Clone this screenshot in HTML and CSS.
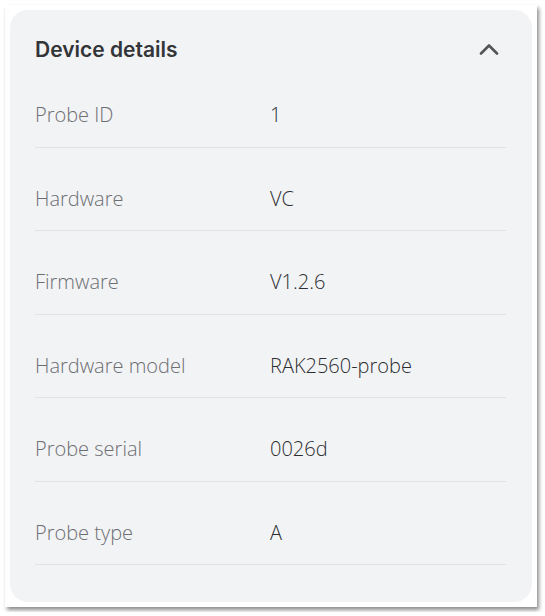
FILE: index.html
```html
<!DOCTYPE html>
<html>
<head>
    <title>Device details</title>
    <link rel="stylesheet" href="styles.css">
</head>
<body>
    <div class="frame">
        <div class="card">
            <div class="card-header">
                <h2>Device details</h2>
                <svg class="chevron" width="20" height="12" viewBox="0 0 20 12">
                    <polyline points="2,10.5 10,2.5 18,10.5" fill="none" stroke="#555" stroke-width="2.6" stroke-linecap="round" stroke-linejoin="round"/>
                </svg>
            </div>

            <div class="row">
                <span class="label">Probe ID</span>
                <span class="value">1</span>
            </div>
            <div class="row">
                <span class="label">Hardware</span>
                <span class="value">VC</span>
            </div>
            <div class="row">
                <span class="label">Firmware</span>
                <span class="value">V1.2.6</span>
            </div>
            <div class="row">
                <span class="label">Hardware model</span>
                <span class="value">RAK2560-probe</span>
            </div>
            <div class="row">
                <span class="label">Probe serial</span>
                <span class="value">0026d</span>
            </div>
            <div class="row">
                <span class="label">Probe type</span>
                <span class="value">A</span>
            </div>
        </div>
    </div>
</body>
</html>
```

FILE: styles.css
```css
body {
    margin: 0;
    background: #fff;
    font-family: "Open Sans", "Noto Sans", sans-serif;
}
.frame {
    margin: 5px;
    width: 522px;
    height: 592px;
    padding: 5px;
    background: #fff;
    box-shadow: 2px 3px 4px rgba(0, 0, 0, 0.45);
}
.card {
    height: 100%;
    box-sizing: border-box;
    background: #f2f3f5;
    border-radius: 18px;
    padding: 24px 26px 0 25px;
}
.card-header {
    display: flex;
    justify-content: space-between;
    align-items: center;
    height: 30px;
}
.card-header h2 {
    margin: 0;
    font-family: Inter, "Noto Sans", sans-serif;
    font-size: 21px;
    font-weight: 600;
    color: #333538;
}
.chevron {
    margin-right: 7px;
}
.row {
    display: flex;
    padding: 39px 0 20px;
    line-height: 23.5px;
    border-bottom: 1px solid #e1e2e5;
    font-size: 20px;
    font-weight: 350;
}
.row:first-of-type {
    padding-top: 21px;
}
.label {
    width: 235px;
    color: #6c6e72;
}
.value {
    color: #2b2d30;
}
```
